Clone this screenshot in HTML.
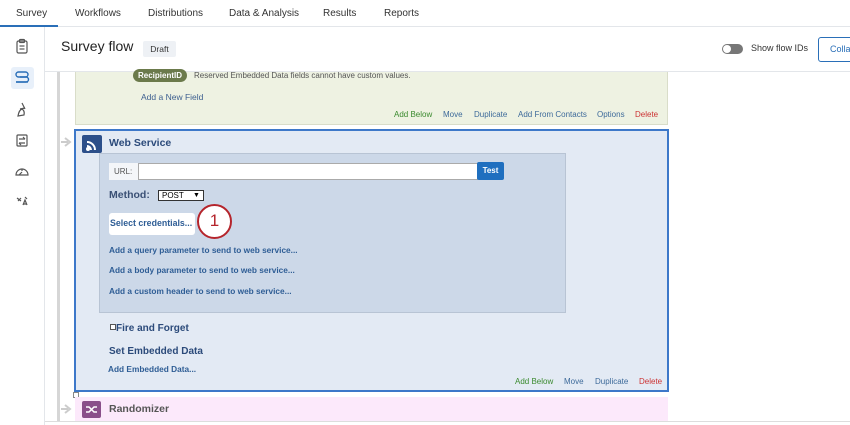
<!DOCTYPE html><html><head><style>
*{margin:0;padding:0;box-sizing:border-box}
body{width:850px;height:425px;overflow:hidden;background:#fff;font-family:"Liberation Sans",sans-serif;position:relative}
.a{position:absolute;white-space:nowrap}
.nav{font-size:10px;color:#333;top:8px}
.lk{font-size:8.3px;font-weight:bold;color:#2e5d95}
.act{font-size:8px;top:0}
</style></head><body>
<div class="a" style="left:0;top:26px;width:850px;height:1px;background:#e3e6ea"></div>
<div class="a" style="left:0;top:25px;width:58px;height:2px;background:#2a6fb8"></div>
<div class="a nav" style="left:16px">Survey</div>
<div class="a nav" style="left:75px">Workflows</div>
<div class="a nav" style="left:148px">Distributions</div>
<div class="a nav" style="left:229px">Data &amp; Analysis</div>
<div class="a nav" style="left:323px">Results</div>
<div class="a nav" style="left:384px">Reports</div>
<!-- sidebar -->
<div class="a" style="left:44px;top:27px;width:1px;height:398px;background:#e3e6ea"></div>
<div class="a" style="left:11px;top:67px;width:23px;height:22px;background:#e8f0fa;border-radius:3px"></div>
<svg class="a" style="left:0;top:27px" width="44" height="200" fill="none" stroke="#555" stroke-width="1.2">
<rect x="17" y="14" width="10" height="12" rx="1.5"/><rect x="19.5" y="12.5" width="5" height="3" rx="1"/><line x1="19.5" y1="19" x2="24.5" y2="19"/><line x1="19.5" y1="22" x2="24.5" y2="22"/>
<g stroke="#2a6fb8" stroke-width="1.4"><rect x="16" y="45" width="12" height="5" rx="2.5"/><path d="M20 50 h6 a2.5 2.5 0 0 1 0 5 h-10"/><path d="M16 55 h12"/></g>
<path d="M22 76 l3 6 M20 82 l5 -1 M18 89 q1-6 4-7 q3 2 2 6 z"/>
<rect x="17" y="108" width="10" height="11" rx="1"/><path d="M19 112 h6 M23 110 l2 2 M25 116 h-6 M21 118 l-2 -2"/>
<path d="M16 148 a6 6 0 0 1 12 0 z M19 148 l3 -3 M22 142 v2"/>
<path d="M17 171 l4 3 M18 174 l3 -3 M23 178 l2 -5 l2 5 M23.5 177 h3 M25 170 l2 2"/>
</svg>
<!-- header -->
<div class="a" style="left:61px;top:38px;font-size:14px;color:#222">Survey flow</div>
<div class="a" style="left:143px;top:41px;width:33px;height:16px;background:#eef1f5;border-radius:2px;font-size:8.5px;color:#333;text-align:center;line-height:16px">Draft</div>
<div class="a" style="left:722px;top:44px;width:21px;height:10px;border-radius:5px;background:#777"></div>
<div class="a" style="left:723px;top:45px;width:8px;height:8px;border-radius:4px;background:#fff"></div>
<div class="a" style="left:751px;top:43px;font-size:9px;color:#333">Show flow IDs</div>
<div class="a" style="left:818px;top:37px;width:40px;height:25px;border:1px solid #2a6fb8;border-radius:3px;font-size:9px;color:#2a6fb8;padding:6px 0 0 11px">Colla</div>
<div class="a" style="left:45px;top:71px;width:805px;height:1px;background:#e3e6ea"></div>
<!-- flow line -->
<div class="a" style="left:57px;top:72px;width:3px;height:350px;background:#d6d6d6"></div>
<div class="a" style="left:45px;top:421px;width:805px;height:1px;background:#ddd"></div>
<!-- green block -->
<div class="a" style="left:75px;top:72px;width:593px;height:53px;background:#eef2e2;border:1px solid #d9ddc9;border-top:none"></div>
<div class="a" style="left:133px;top:69px;width:54px;height:13px;background:#6b7a4b;border-radius:7px;font-size:8px;color:#fff;text-align:center;line-height:13px;font-weight:bold">RecipientID</div>
<div class="a" style="left:194px;top:71px;font-size:8px;color:#555">Reserved Embedded Data fields cannot have custom values.</div>
<div class="a" style="left:141px;top:92px;font-size:8.5px;color:#3d5f8f">Add a New Field</div>
<div class="a" style="left:0;top:110px">
<span class="a act" style="left:394px;color:#3a8a2e">Add Below</span><span class="a act" style="left:443px;color:#3d6a9a">Move</span><span class="a act" style="left:474px;color:#3d6a9a">Duplicate</span><span class="a act" style="left:518px;color:#3d6a9a">Add From Contacts</span><span class="a act" style="left:597px;color:#3d6a9a">Options</span><span class="a act" style="left:635px;color:#cc3333">Delete</span></div>
<!-- web service -->
<svg class="a" style="left:60px;top:136px" width="14" height="12"><path d="M1 6 h7 M5 2 l5 4 -5 4" stroke="#ccc" stroke-width="2" fill="none"/></svg>
<div class="a" style="left:74px;top:129px;width:595px;height:263px;background:#e3eaf4;border:2px solid #3d78c9"></div>
<div class="a" style="left:82px;top:135px;width:20px;height:18px;background:#2c4f8a;border-radius:2px"></div>
<svg class="a" style="left:85px;top:138px" width="14" height="13" fill="none" stroke="#fff" stroke-width="2"><path d="M2 4 a8 8 0 0 1 8 8"/><path d="M2 8 a4 4 0 0 1 4 4"/><circle cx="3" cy="11" r="1" fill="#fff"/></svg>
<div class="a" style="left:109px;top:137px;font-size:10.5px;font-weight:bold;color:#2b4a7a">Web Service</div>
<div class="a" style="left:99px;top:153px;width:467px;height:160px;background:#ccd8e8;border:1px solid #b8c4d4"></div>
<div class="a" style="left:109px;top:163px;width:29px;height:17px;background:#f4f6f9;font-size:8px;color:#555;line-height:17px;padding-left:5px">URL:</div>
<div class="a" style="left:138px;top:163px;width:340px;height:17px;background:#fff;border:1px solid #aaa"></div>
<div class="a" style="left:477px;top:162px;width:27px;height:18px;background:#1f6fbf;border-radius:2px;font-size:8px;color:#fff;font-weight:bold;text-align:center;line-height:17px">Test</div>
<div class="a" style="left:109px;top:189px;font-size:10.5px;font-weight:bold;color:#3a5075">Method:</div>
<div class="a" style="left:158px;top:190px;width:46px;height:11px;background:#fff;border:1px solid #333;font-size:8px;line-height:9px;padding-left:3px">POST <span style="position:absolute;left:34px;font-size:7px">&#9660;</span></div>
<div class="a" style="left:109px;top:213px;width:86px;height:22px;background:#fff;border-radius:3px"></div>
<div class="a lk" style="left:110px;top:218px;font-size:8.8px">Select credentials...</div>
<div class="a" style="left:197px;top:204px;width:35px;height:35px;border-radius:50%;border:2.5px solid #b5252c;background:#fff;font-size:17px;color:#b5252c;text-align:center;line-height:30px">1</div>
<div class="a lk" style="left:109px;top:245px">Add a query parameter to send to web service...</div>
<div class="a lk" style="left:109px;top:265px">Add a body parameter to send to web service...</div>
<div class="a lk" style="left:109px;top:286px">Add a custom header to send to web service...</div>
<div class="a" style="left:110px;top:324px;width:6px;height:6px;border:1px solid #555;background:#fff"></div>
<div class="a" style="left:116px;top:323px;font-size:10px;font-weight:bold;color:#2b4a7a">Fire and Forget</div>
<div class="a" style="left:109px;top:346px;font-size:10px;font-weight:bold;color:#2b4a7a">Set Embedded Data</div>
<div class="a lk" style="left:108px;top:364px">Add Embedded Data...</div>
<div class="a" style="left:0;top:377px">
<span class="a act" style="left:515px;color:#3a8a2e">Add Below</span><span class="a act" style="left:564px;color:#3d6a9a">Move</span><span class="a act" style="left:595px;color:#3d6a9a">Duplicate</span><span class="a act" style="left:639px;color:#cc3333">Delete</span></div>
<div class="a" style="left:73px;top:392px;width:6px;height:6px;border:1px solid #888;background:#fff"></div>
<!-- randomizer -->
<svg class="a" style="left:60px;top:403px" width="14" height="12"><path d="M1 6 h7 M5 2 l5 4 -5 4" stroke="#ccc" stroke-width="2" fill="none"/></svg>
<div class="a" style="left:75px;top:397px;width:593px;height:24px;background:#fce9fb"></div>
<div class="a" style="left:82px;top:401px;width:19px;height:17px;background:#8a4f8a;border-radius:2px"></div>
<svg class="a" style="left:85px;top:404px" width="13" height="11" fill="none" stroke="#fff" stroke-width="1.5"><path d="M1 3 h3 l5 5 h3 M1 8 h3 l5 -5 h3"/></svg>
<div class="a" style="left:109px;top:403px;font-size:10.5px;font-weight:bold;color:#555">Randomizer</div>
</body></html>
